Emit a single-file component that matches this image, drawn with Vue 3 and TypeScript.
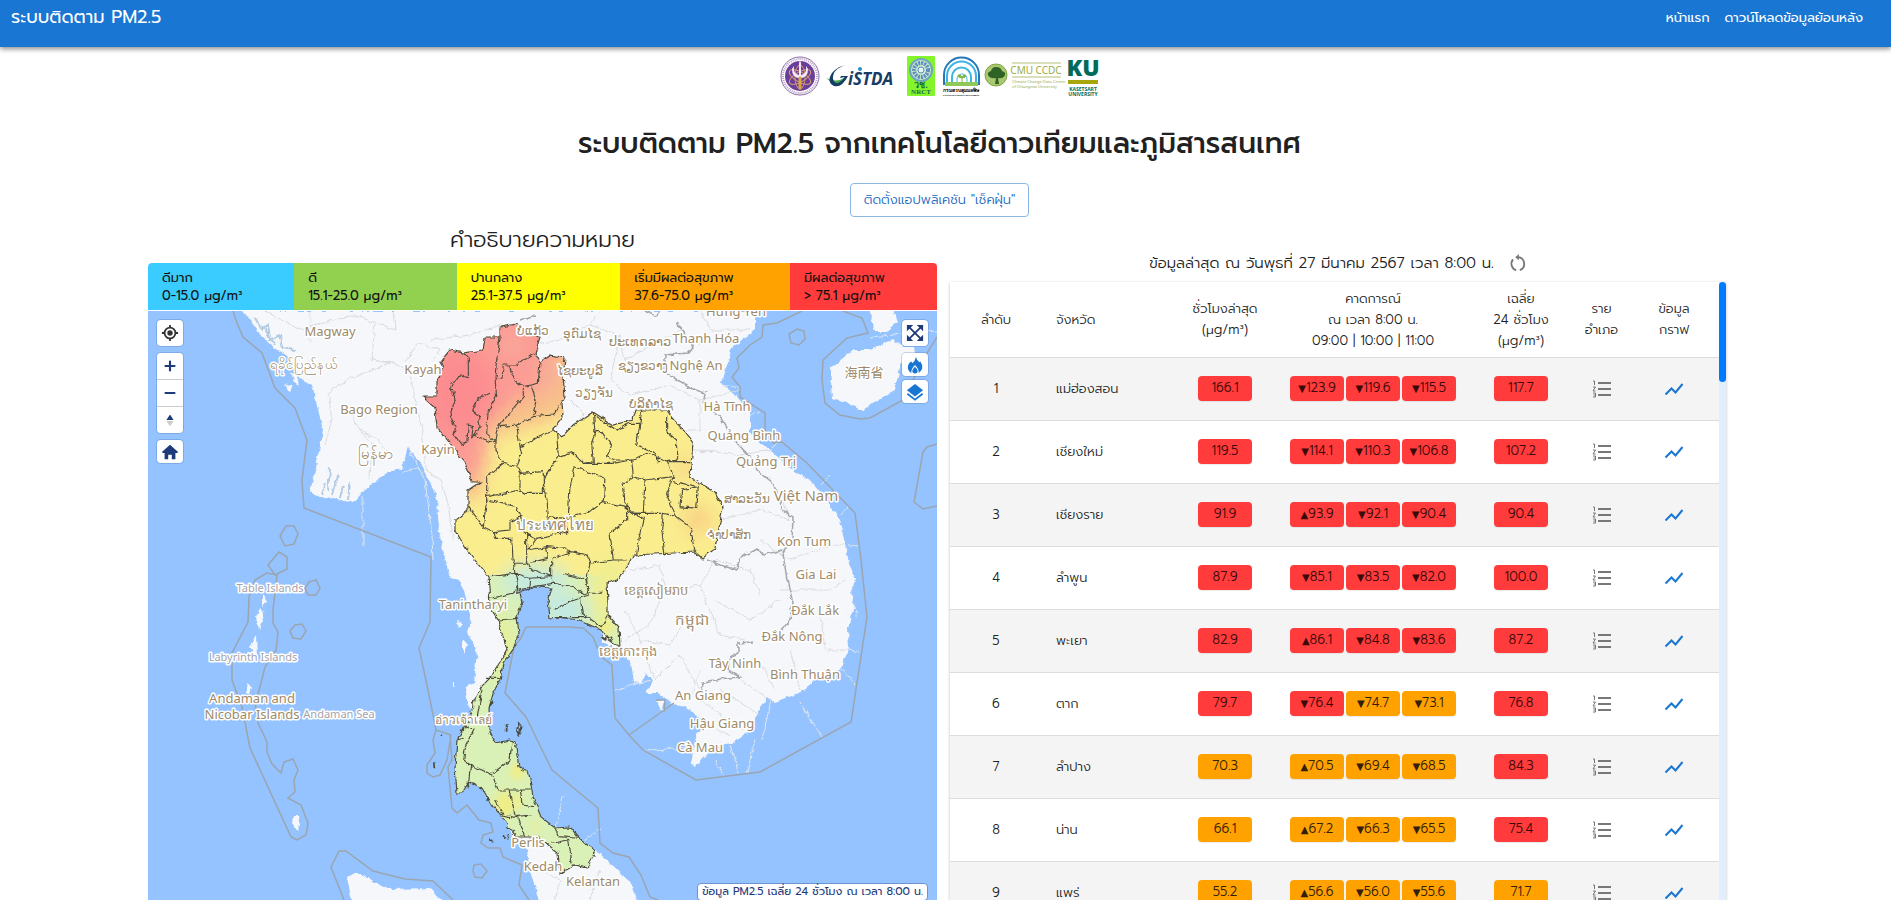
<script setup lang="ts">
interface Level { name: string; range: string; tone: string; span: number }
interface Forecast { up: boolean; value: string }
interface Row { province: string; hour: string; next: Forecast[]; day: string }
interface Label { t: string; x: number; y: number; k?: string }

const levels: Level[] = [
  { name: 'ดีมาก', range: '0-15.0 μg/m³', tone: 'best', span: 145 },
  { name: 'ดี', range: '15.1-25.0 μg/m³', tone: 'good', span: 163 },
  { name: 'ปานกลาง', range: '25.1-37.5 μg/m³', tone: 'fair', span: 164 },
  { name: 'เริ่มมีผลต่อสุขภาพ', range: '37.6-75.0 μg/m³', tone: 'warn', span: 171 },
  { name: 'มีผลต่อสุขภาพ', range: '> 75.1 μg/m³', tone: 'bad', span: 146 },
]

const f = (s: string): Forecast[] =>
  s.split(' ').map(v => ({ up: v.startsWith('+'), value: v.slice(1) }))

const rows: Row[] = [
  { province: 'แม่ฮ่องสอน', hour: '166.1', next: f('-123.9 -119.6 -115.5'), day: '117.7' },
  { province: 'เชียงใหม่', hour: '119.5', next: f('-114.1 -110.3 -106.8'), day: '107.2' },
  { province: 'เชียงราย', hour: '91.9', next: f('+93.9 -92.1 -90.4'), day: '90.4' },
  { province: 'ลำพูน', hour: '87.9', next: f('-85.1 -83.5 -82.0'), day: '100.0' },
  { province: 'พะเยา', hour: '82.9', next: f('+86.1 -84.8 -83.6'), day: '87.2' },
  { province: 'ตาก', hour: '79.7', next: f('-76.4 -74.7 -73.1'), day: '76.8' },
  { province: 'ลำปาง', hour: '70.3', next: f('+70.5 -69.4 -68.5'), day: '84.3' },
  { province: 'น่าน', hour: '66.1', next: f('+67.2 -66.3 -65.5'), day: '75.4' },
  { province: 'แพร่', hour: '55.2', next: f('+56.6 -56.0 -55.6'), day: '71.7' },
]

const tone = (v: string): string => (parseFloat(v) > 75 ? 'bad' : 'warn')

const labels: Label[] = [
  { t: 'Magway', x: 330, y: 336 }, { t: 'ရခိုင်ပြည်နယ်', x: 303, y: 369 },
  { t: 'Kayah', x: 423, y: 374 }, { t: 'Bago Region', x: 379, y: 414 },
  { t: 'မြန်မာ', x: 375, y: 459, k: 'big' }, { t: 'Kayin', x: 438, y: 454 },
  { t: 'ບໍ່ແກ້ວ', x: 533, y: 335, k: 'lao' }, { t: 'ອຸດົມໄຊ', x: 582, y: 338, k: 'lao' },
  { t: 'ປະເທດລາວ', x: 640, y: 346 }, { t: 'Hưng Yên', x: 736, y: 316 },
  { t: 'Thanh Hóa', x: 706, y: 343 }, { t: 'ໄຊຍະບູລີ', x: 580, y: 375, k: 'lao' },
  { t: 'ຊຽງຂວາງ', x: 643, y: 370, k: 'lao' }, { t: 'Nghệ An', x: 696, y: 370 },
  { t: 'ວຽງຈັນ', x: 594, y: 397, k: 'lao' }, { t: 'ບໍລິຄຳໄຊ', x: 651, y: 408, k: 'lao' },
  { t: 'Hà Tĩnh', x: 727, y: 411 }, { t: 'Quảng Bình', x: 744, y: 440 },
  { t: 'Quảng Trị', x: 766, y: 466 }, { t: 'ສາລະວັນ', x: 747, y: 503, k: 'lao' },
  { t: 'Việt Nam', x: 806, y: 501, k: 'big' }, { t: 'ຈຳປາສັກ', x: 729, y: 539, k: 'lao' },
  { t: 'Kon Tum', x: 804, y: 546 }, { t: 'Gia Lai', x: 816, y: 579 },
  { t: 'ประเทศไทย', x: 555, y: 530, k: 'big' }, { t: 'Tanintharyi', x: 473, y: 609 },
  { t: 'ខេត្តសៀមរាប', x: 656, y: 595 }, { t: 'កម្ពុជា', x: 692, y: 625, k: 'big' },
  { t: 'Đắk Lắk', x: 815, y: 615 }, { t: 'Đắk Nông', x: 792, y: 641 },
  { t: 'ខេត្តកោះកុង', x: 628, y: 656 }, { t: 'Tây Ninh', x: 735, y: 668 },
  { t: 'Bình Thuận', x: 805, y: 679 }, { t: 'An Giang', x: 703, y: 700 },
  { t: 'Hậu Giang', x: 722, y: 728 }, { t: 'Cà Mau', x: 700, y: 752 },
  { t: 'อ่าวเจ้าเลย์', x: 463, y: 724, k: 'lao' }, { t: 'Perlis', x: 528, y: 847 },
  { t: 'Kedah', x: 543, y: 871 }, { t: 'Kelantan', x: 593, y: 886 },
  { t: 'Table Islands', x: 270, y: 592, k: 'sea' }, { t: 'Labyrinth Islands', x: 253, y: 661, k: 'sea' },
  { t: 'Andaman and', x: 252, y: 703 }, { t: 'Nicobar Islands', x: 252, y: 719 },
  { t: 'Andaman Sea', x: 339, y: 718, k: 'sea' }, { t: '海南省', x: 864, y: 377 },
]

const thailand =
  'M500 327 518 324 525 333 540 337 535 353 540 362 550 355 565 358 563 377 565 397 562 403 563 417 553 430 562 437 573 425 593 412 613 425 632 420 635 410 667 410 672 418 683 430 693 443 690 477 700 483 715 492 723 507 718 533 715 548 702 558 695 552 633 555 627 567 617 580 607 583 608 603 608 615 619 627 620 647 607 638 601 630 579 620 557 617 550 618 548 600 552 588 534 587 519 590 522 602 517 617 519 633 514 647 503 663 500 680 493 693 489 707 490 733 496 743 510 740 515 742 519 767 529 773 533 797 541 817 555 828 570 827 579 838 595 850 588 868 574 865 560 873 558 853 546 843 538 837 526 837 517 837 508 827 503 817 493 807 483 790 469 782 462 793 457 793 455 767 457 740 464 727 472 710 474 700 481 687 491 677 503 657 507 650 498 620 490 607 489 587 488 577 467 550 455 530 455 520 468 510 468 490 480 482 472 482 465 463 453 447 437 427 435 408 423 397 437 397 437 380 443 367 440 362 450 350 463 353 483 350 485 338 500 338Z'

const mainland =
  'M243 311 250 320 262 337 273 347 283 353 295 365 300 378 312 385 317 405 323 430 317 463 310 492 320 497 333 498 353 503 363 492 377 480 388 472 402 468 408 447 420 463 432 487 437 498 439 533 450 578 459 580 464 590 471 620 467 632 477 650 474 683 465 688 469 707 472 710 464 727 457 740 455 767 457 793 462 793 469 782 483 790 493 807 503 817 508 827 515 840 527 850 529 867 533 880 540 905 640 905 631 883 607 860 595 850 579 838 570 827 555 828 541 817 533 797 529 773 519 767 515 742 510 740 496 743 490 733 489 707 493 693 500 680 503 663 514 647 519 633 517 617 522 602 519 590 534 587 552 588 548 600 550 618 557 617 579 620 601 630 603 642 622 652 631 663 634 682 641 683 646 673 653 680 646 693 658 693 675 705 686 707 703 720 694 743 691 765 696 766 713 747 731 743 751 730 758 710 767 698 775 702 806 690 810 683 841 668 849 650 848 627 855 603 858 620 851 593 855 580 848 560 852 578 840 520 813 483 790 468 770 450 750 433 750 410 722 383 732 347 755 330 755 311Z'
</script>

<template>
  <div class="app">
    <header class="bar">
      <a class="brand" href="#">ระบบติดตาม PM2.5</a>
      <nav>
        <a href="#">หน้าแรก</a>
        <a href="#">ดาวน์โหลดข้อมูลย้อนหลัง</a>
      </nav>
    </header>

    <section class="intro">
      <svg class="logos" viewBox="778 54 322 44" role="img" aria-label="หน่วยงานพันธมิตร">
        <g>
          <circle cx="799" cy="76" r="19" fill="#fff" stroke="#8a6aa5" />
          <circle cx="799" cy="76" r="17" fill="none" stroke="#b79fca" stroke-width="2" stroke-dasharray="1 1" />
          <circle cx="799" cy="76" r="15" fill="#6b3f99" />
          <g fill="none" stroke="#d49a73" stroke-width="1">
            <ellipse cx="799" cy="77" rx="12" ry="5" transform="rotate(30 799 77)" />
            <ellipse cx="799" cy="77" rx="12" ry="5" transform="rotate(-30 799 77)" />
            <ellipse cx="799" cy="77" rx="5" ry="12" />
          </g>
          <path d="M793 66q-1 8 5 9v-12l1-3 1 3v12q6-1 5-9l2 3q0 8-6 9h-4q-6-1-6-9z" fill="#f3e8f5" />
          <path d="M798 77h2v12h-2z" fill="#d8a642" stroke="#d8a642" />
        </g>
        <g>
          <path d="M825 78q12 6 20-2-3 11-10 8-6-2-10-6z" fill="#45a854" />
          <path d="M845 65q-14 4-13 14 3 9 12-2l-5 1 1-2h7q-6 12-14 10-8-4-2-13 6-7 14-8z" fill="#173c66" />
          <circle cx="859" cy="69" r="2" fill="#2a8fc9" />
          <text x="847" y="85" class="gistda">iSTDA</text>
        </g>
        <g>
          <rect x="906" y="56" width="28" height="40" rx="1" fill="#85f52b" />
          <circle cx="920" cy="70" r="11" fill="#c8e8c8" stroke="#70a4c0" stroke-width="2" />
          <circle cx="920" cy="70" r="7" fill="none" stroke="#5c8cc0" stroke-width="4" stroke-dasharray="2 1" />
          <circle cx="920" cy="70" r="3" fill="#e5f4f5" stroke="#5c8cc0" />
          <text x="920" y="88" class="nrct">วช.</text>
          <text x="920" y="94" class="nrct serif">NRCT</text>
        </g>
        <g>
          <path d="M943 85V75a17 17 0 0 1 35 0v10" fill="#fff" stroke="#2478b8" stroke-width="2" />
          <path d="M946 85V76a14 14 0 0 1 29 0v9M951 85v-8a9 9 0 0 1 19 0v8" fill="none" stroke="#3eb4e4" stroke-width="2" />
          <path d="M956 82v-3a5 5 0 0 1 10 0v3" fill="none" stroke="#4bb7df" />
          <path d="M944 82h33v4h-33z" fill="#8fc95a" />
          <path d="M961 83v-5m0 0q-4 0-4-3 4 0 4 3 0-3 4-3 0 3-4 3" fill="#7eb83c" stroke="#7eb83c" />
          <text x="960" y="92" class="tiny">กรมควบคุมมลพิษ</text>
          <text x="960" y="96" class="micro">POLLUTION CONTROL DEPARTMENT</text>
        </g>
        <g>
          <circle cx="995" cy="75" r="11" fill="#a9c870" stroke="#7fa544" />
          <path d="M994 84l1-6q-6 1-8-3-1-3 3-4 1-4 5-4 5 0 6 4 4 1 3 4-2 4-7 3l1 6z" fill="#2f6225" />
          <path d="M1011 63h49M1011 77h49" stroke="#b4bf78" stroke-width="1" />
          <text x="1035" y="74" class="cmu">CMU CCDC</text>
          <text x="1011" y="83" class="cmu-sub">Climate Change Data Center</text>
          <text x="1011" y="88" class="cmu-sub">of Chiangmai University</text>
        </g>
        <g>
          <text x="1082" y="76" class="ku">KU</text>
          <path d="M1067 80h30v4h-30z" fill="#a8a60e" />
          <text x="1082" y="91" class="ku-sub">KASETSART</text>
          <text x="1082" y="96" class="ku-sub">UNIVERSITY</text>
        </g>
      </svg>
      <h1>ระบบติดตาม PM2.5 จากเทคโนโลยีดาวเทียมและภูมิสารสนเทศ</h1>
      <button class="install" type="button">ติดตั้งแอปพลิเคชัน "เช็คฝุ่น"</button>
    </section>

    <main class="content">
      <section class="left">
        <h2>คำอธิบายความหมาย</h2>
        <div class="legend">
          <div v-for="l in levels" :key="l.tone" :class="['level', l.tone]" :style="{ flexGrow: l.span }">
            <span>{{ l.name }}</span>
            <span>{{ l.range }}</span>
          </div>
        </div>
        <div class="map">
          <svg class="canvas" viewBox="148 311 789 589" preserveAspectRatio="xMidYMin slice" role="img" aria-label="แผนที่ PM2.5">
            <defs>
              <filter id="ragged" x="-5%" y="-5%" width="110%" height="110%">
                <feTurbulence type="fractalNoise" baseFrequency="0.15" numOctaves="3" seed="4" result="n" />
                <feDisplacementMap in="SourceGraphic" in2="n" scale="5" xChannelSelector="R" yChannelSelector="G" />
              </filter>
              <filter id="haze" x="-50%" y="-50%" width="200%" height="200%"><feGaussianBlur stdDeviation="9" /></filter>
              <filter id="spot" x="-50%" y="-50%" width="200%" height="200%"><feGaussianBlur stdDeviation="4" /></filter>
              <clipPath id="country"><path :d="thailand" /></clipPath>
            </defs>
            <rect x="148" y="311" width="789" height="589" fill="#94c3ff" />
            <g fill="#f5f7fa" filter="url(#ragged)">
              <path :d="mainland" />
              <path d="M830 368 838 362 853 350 870 350 893 339 903 347 914 347 915 353 901 363 898 377 893 392 873 403 863 411 853 405 832 399Z" />
              <path d="M868 305H892L897 322 885 332 875 332Z" />
              <path d="M347 877 352 874 361 874 388 889 430 888 446 905H352Z" />
              <path d="M262 593 267 602 262 607ZM260 608 265 615 259 629 256 618ZM256 635 257 657 250 647ZM248 683 251 687 249 695 246 693ZM293 817 298 817 300 825 297 831 292 822ZM290 372 297 376 299 386 294 381ZM285 385 293 384 290 392ZM458 619 463 624 459 629ZM463 640 467 645 463 654ZM452 680 455 687 452 686ZM657 702 665 700 662 712Z" />
            </g>

            <g class="province" filter="url(#ragged)">
              <path d="M265 311 300 330 350 315 375 322 372 360 390 363 350 378 328 393 332 420 325 445M375 322 395 330 393 311M372 360 395 362 410 375 422 430 426 470 441 480 450 510 453 540M350 408 357 428 378 440 390 455M357 428 372 442 370 480M405 362 418 343 440 350 433 362M430 340 470 335 500 325M530 345 560 340 590 325 620 335 625 360 680 330 700 345M590 325 600 311M620 335 610 380 630 395 670 385 700 400 740 390M570 400 585 415M700 400 700 430 680 430M700 450 740 455 770 450M700 311 710 330 750 330M690 450 705 452M720 520 760 510 790 520 780 490M760 540 790 560 830 545 845 545M630 570 660 565 665 590 700 585 715 560 750 570 760 595M625 610 640 640 670 645 685 620M640 640 655 680 680 655 700 690M660 600 650 625 625 640M700 585 720 635 745 640M715 600 750 620 780 600M780 590 830 590 845 580M790 650 800 690M760 660 775 690M700 700 750 735M720 690 760 715M740 680 770 700M690 720 730 735M820 610 825 650 850 650M540 870 560 880 555 900M600 870 590 900" />
              <path d="M363 495V547M402 472 418 468M408 447 425 480 432 535 433 560M310 311V343M700 670 690 700M615 690 650 680M703 748 644 750M715 760 723 775M730 745 738 772M755 740 747 773M770 700 763 740M800 702 822 737M841 668 856 685M849 650 860 652M553 840 563 796M581 843 600 829M722 385 740 388M750 415 760 412M770 450 780 440M820 485 830 475M842 515 850 505M848 545 858 546M870 337 937 331" stroke="#dfe7ef" />
              <path d="M255 318 262 330 268 325 270 340 280 335 282 348 295 350M262 325 275 345M330 468 328 492M338 475 332 495M343 485 340 498M350 482 348 500M325 482 322 495" stroke="#b4cbe4" stroke-width="2" />
            </g>

            <g class="limit">
              <path d="M233 311 237 323 243 337 262 353 275 388 295 408 307 440 302 480 304 508 431 557 430 622 419 648 428 690 436 730 451 735" />
              <path d="M280 536 286 526 294 526 298 534 294 544 285 546ZM268 565 279 552 287 557 287 569 275 575ZM255 580 267 573 277 575 273 610 273 623 278 632 276 650 265 667 260 687 255 703 258 723 267 742 267 752 272 764 281 773 284 762 293 759 298 770 294 780 295 792 288 798 301 805 308 823 306 835 297 840 291 837 250 748 242 707 232 680 232 653 248 622 249 597Z" />
              <path d="M309 582 316 580 320 588 316 595 308 595 305 588ZM295 625 302 624 306 631 301 639 293 638 290 631Z" />
              <path d="M344 900 331 867 339 851 346 851 373 871 405 879 433 881 453 900M436 730 433 740 435 753 427 765 427 773 433 777 440 775 447 760 451 735M450 735 452 760 448 767 452 808 457 813 467 805 479 820 491 823 493 832 483 835 481 843 488 848 500 848 503 857 522 865 519 885 529 900M474 865 481 864 487 871 482 878 475 877 473 871Z" />
              <path d="M526 627 569 627 583 628 593 637 601 657 612 665 615 718 629 735 643 750 696 780 760 772 851 722 867 617 861 560 855 513 807 463 782 442 773 443 765 430 765 413 740 397 740 387 732 377 739 368 737 358 750 345 762 337 763 325 777 323 802 311" />
              <path d="M526 627 521 638 514 647 505 693 526 717 552 770 598 808 600 843 613 853 629 857 641 875 650 897 658 900M629 735 674 703M656 700 665 700 664 712" />
              <path d="M843 311 862 318 868 333 847 338 823 360 822 380 825 403 840 415 860 419 870 418 903 400 913 380 927 353 937 337M797 329 804 331 805 339 799 345 791 343 789 334ZM937 444 927 447 923 452 914 502 923 509 937 506" />
            </g>
            <g class="border" filter="url(#ragged)">
              <path d="M677 323 693 347 688 353 665 355 665 372 690 388 705 393 703 403 720 417 737 443 750 457 757 470 773 483 783 510 793 517 792 540 783 553 787 580 792 600 790 620 780 632M752 642 738 643 738 653 730 657 728 670 741 677 727 678 703 682 701 697M708 560 720 565 737 570 740 558 757 548 763 555 783 550M520 320 535 315M645 311 655 316 660 311" />
            </g>

            <g filter="url(#ragged)">
              <g clip-path="url(#country)">
                <rect x="400" y="311" width="340" height="270" fill="#faed8e" />
                <rect x="440" y="575" width="200" height="310" fill="#d9f0b7" />
                <g filter="url(#haze)">
                  <path d="M400 300H590V400L540 425 492 435 480 500 400 490Z" fill="#f8c08a" />
                  <path d="M400 300H555V385L515 400 490 425 478 480 400 480Z" fill="#fc9b94" />
                  <ellipse cx="460" cy="392" rx="34" ry="45" fill="#fc8c90" />
                  <ellipse cx="512" cy="345" rx="10" ry="12" fill="#f8ab9b" />
                  <ellipse cx="548" cy="375" rx="12" ry="18" fill="#f8ad98" />
                  <ellipse cx="698" cy="520" rx="14" ry="14" fill="#f8cf85" />
                  <ellipse cx="685" cy="468" rx="8" ry="12" fill="#f8cf85" />
                  <ellipse cx="535" cy="580" rx="32" ry="16" fill="#c4ebe2" />
                  <ellipse cx="565" cy="610" rx="22" ry="14" fill="#bfe8e8" />
                  <ellipse cx="610" cy="590" rx="20" ry="34" fill="#f0ee90" />
                  <ellipse cx="499" cy="645" rx="14" ry="30" fill="#e8f094" />
                </g>
                <g filter="url(#spot)">
                  <ellipse cx="517" cy="772" rx="6" ry="8" fill="#f7ee78" />
                  <ellipse cx="504" cy="804" rx="9" ry="14" fill="#f0ee84" />
                  <ellipse cx="518" cy="802" rx="5" ry="8" fill="#eff08c" />
                  <ellipse cx="535" cy="826" rx="6" ry="6" fill="#e6f0a0" />
                  <ellipse cx="605" cy="627" rx="8" ry="8" fill="#f0ee84" />
                </g>
              </g>
              <path class="edge" :d="thailand" />
              <g class="edge" transform="translate(400 300) scale(.3333)">
                <path d="M190 160 205 175 205 230 180 225 155 260 165 300 150 345 165 380 160 400 185 435 200 430 205 375 220 380 215 410 235 400M300 115 290 180 285 235 290 290 265 330 260 400 285 425 285 450 310 490 350 500 365 460 360 440 460 390M270 280 230 300 215 330 235 345 240 380 220 405 285 430M285 235 305 235 310 195 350 195 405 160M325 195 345 240 370 260 415 250 420 185M370 260 370 290 300 370 290 390 285 425M395 260 410 310 400 350 350 375 300 380M400 350 460 345 475 315M350 375 360 440" />
                <path d="M310 490 260 530 260 600 250 680 205 620M260 590 360 570 360 520 350 500M360 520 430 515 430 580 375 580 360 570M470 400 475 470 440 520 430 550 440 590 445 650 495 655 560 640 610 605 615 535 525 500 510 560 505 650M475 470 515 455 550 490 580 485 575 430 585 395 580 335M585 395 605 395 635 440 620 470 645 480 700 480 740 460 805 485 830 480 830 420 800 395 800 345M580 345 650 390 690 370 720 370 725 330M720 370 710 435 760 455 780 490M805 485 870 485M550 490 640 490 695 480 700 530 735 540 820 530 805 485M700 530 670 550 675 610 700 640 730 640 735 540" />
                <path d="M820 530 800 580 815 620 830 650M820 545 895 560 890 625 840 620 845 570 895 560M610 605 680 620 680 660 630 700 640 780 680 780M700 640 730 655 720 700 710 765M670 620 700 640 790 640 785 690 795 765M790 640 830 650 870 680 885 755M260 600 350 620 365 650 330 665 330 690 280 695 250 680M280 695 285 715 335 715 340 790 345 820 270 830M365 650 370 690 380 700 380 790 340 790M445 650 440 680 500 700 500 655M380 700 410 715 480 700M410 715 385 750 440 740 445 775 380 790M440 740 490 745 515 755 455 775 455 830 400 810 380 790M515 755 560 765 570 790 560 840 490 820M570 790 640 780M345 820 390 835 385 870 350 880 355 855ZM390 835 450 830 460 850 400 860M560 840 565 880 610 880M460 850 520 860 550 885 565 880M270 895 340 880 355 855" />
              </g>
              <g class="edge" transform="translate(400 560) scale(.344 .3333)">
                <path d="M285 180 345 175M250 355 290 355M240 380 225 470 190 500 215 510 190 560 185 600 205 615 200 665M185 535 165 540M205 615 270 645 285 690M270 640 320 600 325 545M285 690 380 690M320 690 335 770 385 765M275 720 300 765 345 775 365 830M350 690 355 735 390 740M450 805 460 830 520 835M490 840 500 910M440 850 490 840M450 150 490 125 550 105 540 60M525 120 530 160 585 200 605 165M450 170 540 170" />
                <path d="M310 490v25M345 490l8 10-8 25-5-15zM122 525l3 2M310 825l5 10M262 840l10 3M195 665l5 20M240 690l8 15M252 715l6 8M98 610l2 15M585 230l15 10M610 230l8 12M185 505l-4 12M262 435l5-10M300 825l4 12" stroke-width="5" />
              </g>
            </g>
            <text v-for="l in labels" :key="l.t" :x="l.x" :y="l.y" :class="['place', l.k]">{{ l.t }}</text>
          </svg>

          <div class="tools tools-left">
            <button type="button" class="tool" aria-label="ตำแหน่งของฉัน">
              <svg viewBox="0 0 20 20"><circle cx="10" cy="10" r="6" fill="none" stroke="#333" stroke-width="2" /><circle cx="10" cy="10" r="3" fill="#333" /><path d="M10 1v3M10 16v3M1 10h3M16 10h3" stroke="#333" stroke-width="2" /></svg>
            </button>
            <div class="stack">
              <button type="button" aria-label="ซูมเข้า"><svg viewBox="0 0 20 20"><path d="M10 5v10M5 10h10" stroke="#1e3a7b" stroke-width="2.4" stroke-linecap="round" /></svg></button>
              <button type="button" aria-label="ซูมออก"><svg viewBox="0 0 20 20"><path d="M5 10h10" stroke="#1e3a7b" stroke-width="2.4" stroke-linecap="round" /></svg></button>
              <button type="button" aria-label="ทิศเหนือ"><svg viewBox="0 0 20 20"><path d="M10 4l4 6H6z" fill="#1e3a7b" /><path d="M10 17l4-6H6z" fill="#ccc" /></svg></button>
            </div>
            <button type="button" class="tool short" aria-label="หน้าแรกของแผนที่">
              <svg viewBox="0 0 20 20"><path d="M10 2l9 8-1 1h-2v7h-4v-5H8v5H4v-7H2l-1-1z" fill="#1e3a7b" /></svg>
            </button>
          </div>
          <div class="tools tools-right">
            <button type="button" class="tool" aria-label="เต็มจอ">
              <svg viewBox="0 0 20 20"><path d="M1 1h7L1 8zM19 1h-7l7 7zM1 19h7l-7-7zM19 19h-7l7-7z" fill="#1e3a7b" /><path d="M4 4l12 12M16 4L4 16" stroke="#1e3a7b" stroke-width="2" /></svg>
            </button>
            <button type="button" class="tool short" aria-label="จุดความร้อน">
              <svg viewBox="0 0 20 20"><path d="M11 1q1 4 4 6l1-1q3 4 2 8-1 3-4 5 1-4-4-9-5 5-4 9-4-2-4-7 1-5 4-6l1 2q3-2 4-7z" fill="#1976d2" /><path d="M10 12q3 3 3 4.500a3 3 0 0 1-6 0Q7 15 10 12z" fill="#1976d2" /></svg>
            </button>
            <button type="button" class="tool short" aria-label="ชั้นข้อมูล">
              <svg viewBox="0 0 20 20"><path d="M10 1l9 7-9 7-9-7z" fill="#1976d2" /><path d="M1.500 12l8.500 6.500 8.500-6.500" fill="none" stroke="#1976d2" stroke-width="2" /></svg>
            </button>
          </div>
          <p class="stamp">ข้อมูล PM2.5 เฉลี่ย 24 ชั่วโมง ณ เวลา 8:00 น.</p>
        </div>
      </section>

      <section class="right">
        <div class="latest">
          <span>ข้อมูลล่าสุด ณ วันพุธที่ 27 มีนาคม 2567 เวลา 8:00 น.</span>
          <button type="button" aria-label="รีเฟรช">
            <svg viewBox="0 0 20 20"><path d="M10 3.500a7.500 7.500 0 0 1 2 14.500M8 18A7.500 7.500 0 0 1 4.500 6" fill="none" stroke="#777" stroke-width="2" /><path d="M11 0v7L7 3.500z" fill="#777" /></svg>
          </button>
        </div>
        <div class="panel">
          <div class="scroller">
            <table>
              <colgroup>
                <col class="c-rank"><col class="c-name"><col class="c-hour"><col class="c-next"><col class="c-hour"><col class="c-list"><col class="c-graph">
              </colgroup>
              <thead>
                <tr>
                  <th scope="col">ลำดับ</th>
                  <th scope="col" class="name">จังหวัด</th>
                  <th scope="col">ชั่วโมงล่าสุด<br>(μg/m³)</th>
                  <th scope="col">คาดการณ์<br>ณ เวลา 8:00 น.<br>09:00 | 10:00 | 11:00</th>
                  <th scope="col">เฉลี่ย<br>24 ชั่วโมง<br>(μg/m³)</th>
                  <th scope="col">ราย<br>อำเภอ</th>
                  <th scope="col">ข้อมูล<br>กราฟ</th>
                </tr>
              </thead>
              <tbody>
                <tr v-for="(r, i) in rows" :key="r.province">
                  <td>{{ i + 1 }}</td>
                  <td class="name">{{ r.province }}</td>
                  <td><span :class="['chip', tone(r.hour)]">{{ r.hour }}</span></td>
                  <td>
                    <div class="trio">
                      <span v-for="n in r.next" :key="n.value" :class="['chip', tone(n.value)]"><i>{{ n.up ? '▲' : '▼' }}</i>{{ n.value }}</span>
                    </div>
                  </td>
                  <td><span :class="['chip', tone(r.day)]">{{ r.day }}</span></td>
                  <td>
                    <button type="button" class="act" :aria-label="'รายอำเภอ ' + r.province">
                      <svg viewBox="0 0 20 20"><path d="M6 4h13M6 10h13M6 16h13" stroke="#777" stroke-width="2" /><path d="M1 2h1.500v4M1 8h2.500L1 12h2.500M1 14h2.500v4H1M1.500 16h2" fill="none" stroke="#777" /></svg>
                    </button>
                  </td>
                  <td>
                    <button type="button" class="act" :aria-label="'กราฟ ' + r.province">
                      <svg viewBox="0 0 20 20"><path d="M1.500 15.500l6-6 4 4 7-8.500" fill="none" stroke="#1976d2" stroke-width="2" /></svg>
                    </button>
                  </td>
                </tr>
              </tbody>
            </table>
          </div>
          <div class="track"><div class="thumb"></div></div>
        </div>
      </section>
    </main>
  </div>
</template>

<style>
body { margin: 0; background: #fff; }
</style>

<style scoped>
.app {
  display: flex;
  flex-direction: column;
  height: 100vh;
  overflow: hidden;
  color: #212121;
  font-family: Prompt, Kanit, "Liberation Serif", serif;
  font-size: 13px;
}
button { font: inherit; padding: 0; border: 0; background: none; cursor: pointer; }
a { color: inherit; text-decoration: none; }

.bar {
  display: flex;
  flex: none;
  justify-content: space-between;
  box-sizing: border-box;
  height: 47px;
  padding: 4px 28px 0 11px;
  line-height: 26px;
  color: #fff;
  background: #1976d2;
  box-shadow: 0 2px 5px rgba(0, 0, 0, .45);
}
.brand { font-size: 18px; font-weight: 400; }
nav { display: flex; gap: 15px; font-weight: 400; line-height: 28px; }

.intro { display: flex; flex: none; flex-direction: column; align-items: center; padding: 7px 12px 0 0; }
.logos { width: 322px; height: 44px; }
h1 { margin: 24px 0 0; font-size: 28px; font-weight: 500; line-height: 44px; white-space: nowrap; }
.install {
  margin-top: 17px;
  padding: 0 13px;
  border: 1px solid #8cb8e4;
  border-radius: 4px;
  color: #1565c0;
  font-size: 13px;
  font-weight: 300;
  line-height: 32px;
}
.gistda { font: italic 700 17px "Open Sans", sans-serif; fill: #173c66; }
.nrct { font: 700 9px "Noto Sans", sans-serif; fill: #176b4e; text-anchor: middle; }
.nrct.serif { font: 700 7px "Liberation Serif", serif; }
.tiny { font: 700 5px sans-serif; text-anchor: middle; }
.micro { font: 700 2px sans-serif; text-anchor: middle; }
.cmu { font: 10px "Noto Sans", sans-serif; fill: #9bad45; text-anchor: middle; }
.cmu-sub { font: 4px "Noto Sans", sans-serif; fill: #92aa50; }
.ku { font: 800 23px "Open Sans", sans-serif; fill: #006b5b; text-anchor: middle; }
.ku-sub { font: 700 5px "Open Sans", sans-serif; fill: #006b5b; text-anchor: middle; }

.content {
  display: grid;
  flex: 1;
  grid-template-columns: 1fr 1fr;
  box-sizing: border-box;
  width: 100%;
  max-width: 1595px;
  min-height: 0;
  margin: 0 auto;
  padding-right: 17px;
}
.left, .right { display: flex; flex-direction: column; min-width: 0; min-height: 0; }
h2 { margin: 8px 0; font-size: 22px; font-weight: 300; line-height: 30px; text-align: center; }
.legend { display: flex; flex: none; height: 47px; margin-bottom: 1px; overflow: hidden; border-radius: 4px 4px 0 0; font-weight: 400; }
.level { display: flex; flex: 1 1 0; flex-direction: column; justify-content: center; padding-left: 14px; color: #111; line-height: 18px; min-width: 0; box-sizing: border-box; white-space: nowrap; }
.best { background: #3bccff; }
.good { background: #92d050; }
.fair { background: #ff0; }
.warn { background: #ffa200; }
.bad { background: #ff3b3b; }

.map { position: relative; flex: 1; min-height: 0; overflow: hidden; background: #94c3ff; }
.canvas { display: block; width: 100%; height: 100%; }
.province { fill: none; stroke: #d9dbdf; }
.limit { fill: none; stroke: #9aa5b1; stroke-width: 1.5; }
.border { fill: none; stroke: #a3a6aa; stroke-width: 1.5; }
.edge { fill: none; stroke: #4d4b3e; stroke-width: 1.2; }
g.edge { stroke-width: 3.4; }
.place {
  fill: #9c8a6a;
  stroke: #fff;
  stroke-width: 3px;
  stroke-linejoin: round;
  paint-order: stroke;
  font: 13px "Noto Sans", "Noto Sans CJK SC", sans-serif;
  text-anchor: middle;
}
.big { font-size: 15px; }
.lao { font-size: 12px; }
.sea { fill: #a3a4ae; font-size: 11px; }

.tools { position: absolute; top: 9px; display: flex; flex-direction: column; }
.tools button { display: grid; place-items: center; width: 26px; height: 26px; background: #fff; }
.tools svg { width: 18px; height: 18px; }
.tools-left { left: 9px; gap: 7px; }
.tools-right { right: 9px; gap: 4px; }
.tools .tool, .stack { border-radius: 4px; box-shadow: 0 0 0 1px rgba(60, 100, 150, .25); }
.tools .short { height: 23px; }
.tools-right .tool:first-child { margin-bottom: 3px; }
.stack { display: flex; flex-direction: column; gap: 1px; overflow: hidden; background: #ccc; }
.stamp {
  position: absolute;
  right: 9px;
  bottom: -1px;
  margin: 0;
  padding: 0 4px;
  border: 1px solid #6b93cf;
  border-radius: 4px;
  color: #1e3a7b;
  background: #fff;
  font-size: 11px;
  line-height: 16px;
}

.right { padding-left: 13px; }
.latest { display: flex; flex: none; align-items: center; justify-content: center; gap: 15px; height: 30px; margin-top: 31px; margin-bottom: 4px; font-size: 15px; font-weight: 300; line-height: 30px; }
.latest button { width: 18px; height: 18px; }
.latest svg { display: block; width: 18px; height: 18px; }
.panel { display: flex; flex: 1; min-height: 0; font-weight: 300; box-shadow: 0 1px 3px rgba(0, 0, 0, .25); }
.scroller { flex: 1; overflow-y: auto; scrollbar-width: none; }
.track { width: 7px; background: #e0efff; }
.thumb { height: 100px; border-radius: 4px; background: #007bff; }
table { width: 100%; table-layout: fixed; border-spacing: 0; }
.c-rank { width: 92px; }
.c-name { width: 130px; }
.c-hour { width: 106px; }
.c-next { width: 190px; }
.c-list { width: 55px; }
.c-graph { width: 90px; }
th { position: sticky; top: 0; height: 74px; padding: 0 0 1px; border-bottom: 1px solid #ddd; background: #fff; font-weight: 300; line-height: 21px; }
td { height: 61px; padding: 0 0 1px; border-bottom: 1px solid #ddd; text-align: center; }
tbody tr:nth-child(odd) { background: #f4f4f4; }
th.name, td.name { padding-left: 14px; text-align: left; }
.chip { display: inline-block; width: 54px; height: 25px; border-radius: 4px; color: #3a0a0a; font-size: 13px; line-height: 23px; text-align: center; vertical-align: middle; box-shadow: 0 1px 1px rgba(0, 0, 0, .08); }
.chip.warn { color: #33200a; }
.chip i { font: 10px "DejaVu Sans", sans-serif; }
.trio { display: flex; justify-content: center; gap: 2px; }
.act { display: inline-block; width: 20px; height: 20px; vertical-align: middle; }
.act svg { display: block; width: 20px; height: 20px; }
</style>
